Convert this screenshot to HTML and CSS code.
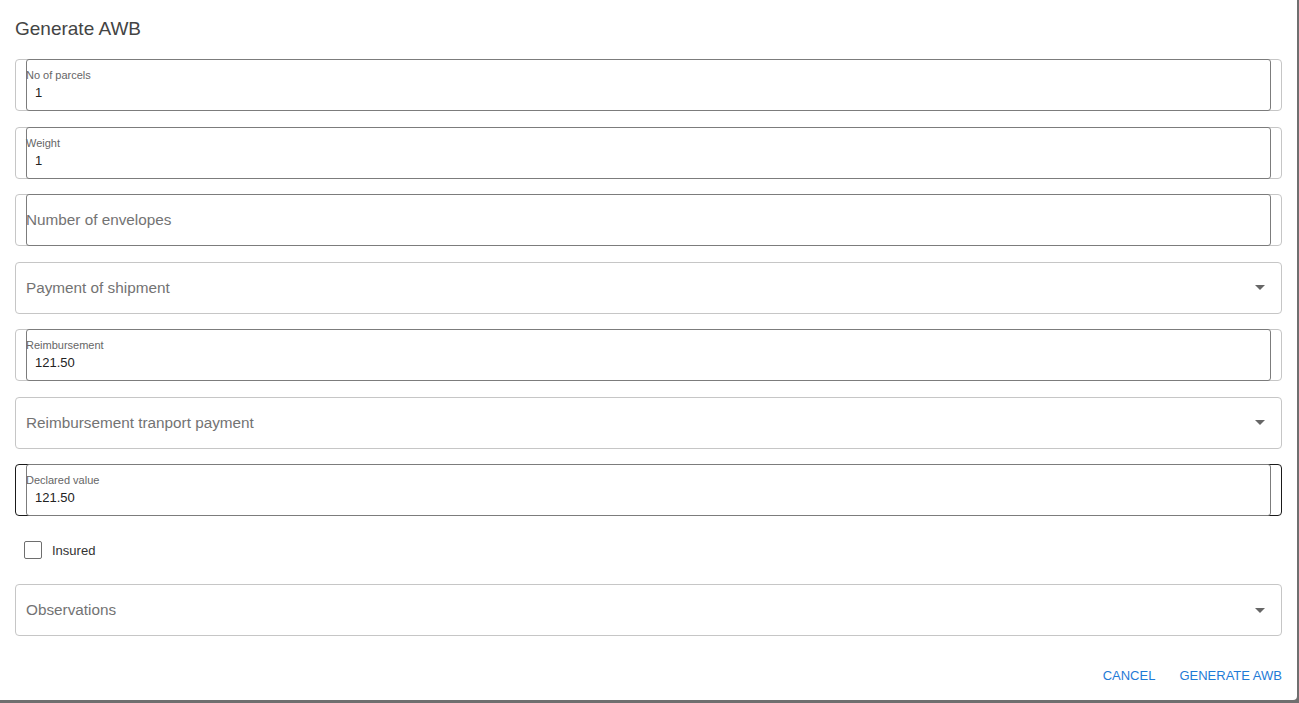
FILE: index.html
```html
<!DOCTYPE html>
<html lang="en">
<head>
<meta charset="utf-8">
<title>Generate AWB</title>
<link rel="stylesheet" href="styles.css">
</head>
<body>
<div class="dialog">
  <h2 class="title">Generate AWB</h2>
  <div class="form">
    <div class="field">
      <div class="input">
        <span class="label">No of parcels</span>
        <span class="value">1</span>
      </div>
    </div>
    <div class="field">
      <div class="input">
        <span class="label">Weight</span>
        <span class="value">1</span>
      </div>
    </div>
    <div class="field">
      <div class="input input-empty">
        <span class="placeholder">Number of envelopes</span>
      </div>
    </div>
    <div class="field select">
      <span class="select-text">Payment of shipment</span>
      <span class="arrow"></span>
    </div>
    <div class="field">
      <div class="input">
        <span class="label">Reimbursement</span>
        <span class="value">121.50</span>
      </div>
    </div>
    <div class="field select">
      <span class="select-text">Reimbursement tranport payment</span>
      <span class="arrow"></span>
    </div>
    <div class="field focused">
      <div class="input">
        <span class="label">Declared value</span>
        <span class="value">121.50</span>
      </div>
    </div>
    <div class="check-row">
      <span class="checkbox"></span>
      <span class="check-label">Insured</span>
    </div>
    <div class="field select">
      <span class="select-text">Observations</span>
      <span class="arrow"></span>
    </div>
  </div>
  <div class="actions">
    <button class="btn">CANCEL</button>
    <button class="btn">GENERATE AWB</button>
  </div>
</div>
</body>
</html>
```

FILE: styles.css
```css
html, body {
  margin: 0;
  padding: 0;
  height: 100%;
}
body {
  background: #6f6f6f;
  font-family: "Liberation Sans", Arial, sans-serif;
  overflow: hidden;
}
.dialog {
  width: 1297px;
  height: 700px;
  background: #ffffff;
  box-sizing: border-box;
  padding: 17px 15px 0 15px;
  border-radius: 0 0 4px 0;
}
.title {
  margin: 0 0 18px 0;
  font-size: 19px;
  line-height: 24px;
  font-weight: normal;
  color: #444444;
}
.form {
  display: flex;
  flex-direction: column;
  gap: 15.5px;
}
.field {
  height: 52px;
  box-sizing: border-box;
  border: 1px solid #c6c6c6;
  border-radius: 4px;
  padding: 0 10px;
}
.field.focused {
  border-color: #1a1a1a;
}
.input {
  height: 52px;
  margin: -1px 0;
  box-sizing: border-box;
  border: 1px solid #7c7c7c;
  border-radius: 3px;
  display: flex;
  flex-direction: column;
  padding-top: 9px;
}
.label {
  margin-left: -1px;
  font-size: 11px;
  line-height: 13px;
  color: #666666;
}
.value {
  margin-top: 3px;
  margin-left: 8px;
  font-size: 13px;
  line-height: 15px;
  color: #222222;
}
.input-empty {
  padding-top: 0;
  justify-content: center;
}
.placeholder {
  margin-left: -1px;
  font-size: 15.3px;
  line-height: 18px;
  color: #737373;
}
.select {
  display: flex;
  align-items: center;
  justify-content: space-between;
  padding: 0 16px 0 10px;
}
.select-text {
  font-size: 15.3px;
  line-height: 18px;
  color: #737373;
}
.arrow {
  width: 0;
  height: 0;
  border-left: 5px solid transparent;
  border-right: 5px solid transparent;
  border-top: 5px solid #666666;
}
.check-row {
  height: 37px;
  display: flex;
  align-items: center;
  padding-left: 9px;
  gap: 10px;
}
.checkbox {
  width: 18px;
  height: 18px;
  box-sizing: border-box;
  border: 1px solid #6e6e6e;
  border-radius: 2px;
}
.check-label {
  font-size: 13px;
  color: #333333;
}
.actions {
  margin-top: 21px;
  height: 36px;
  display: flex;
  justify-content: flex-end;
  align-items: center;
  gap: 24px;
}
.btn {
  background: none;
  border: none;
  padding: 0;
  font-family: "Liberation Sans", Arial, sans-serif;
  font-size: 13px;
  color: #1f7bd6;
  cursor: pointer;
}
```
